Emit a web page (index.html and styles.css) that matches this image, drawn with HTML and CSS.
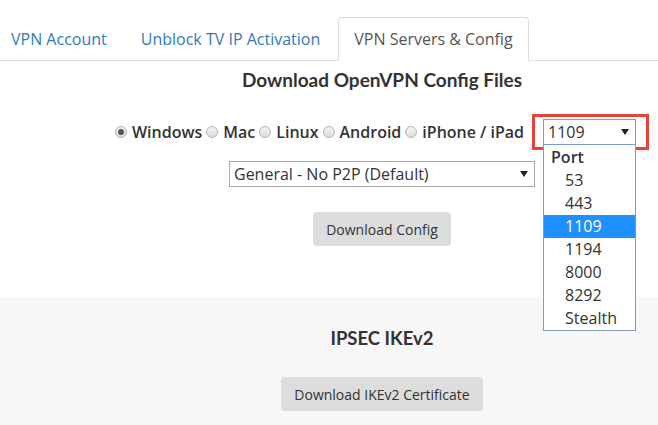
FILE: index.html
```html
<!DOCTYPE html>
<html lang="en">
<head>
    <meta charset="UTF-8">
    <meta name="viewport" content="width=device-width, initial-scale=1.0">
    <title>VPN Servers &amp; Config</title>
    <link rel="stylesheet" href="styles.css">
</head>
<body>
    <ul class="nav-tabs">
        <li><a href="#">VPN Account</a></li>
        <li><a href="#">Unblock TV IP Activation</a></li>
        <li class="active"><a href="#">VPN Servers &amp; Config</a></li>
    </ul>

    <section class="openvpn">
        <div class="inner">
            <h3>Download OpenVPN Config Files</h3>
            <div class="os-row">
                <label class="os"><input type="radio" name="os" checked> Windows</label>
                <label class="os"><input type="radio" name="os"> Mac</label>
                <label class="os"><input type="radio" name="os"> Linux</label>
                <label class="os"><input type="radio" name="os"> Android</label>
                <label class="os"><input type="radio" name="os"> iPhone / iPad</label>
                <span class="marker">
                    <span class="port-wrap">
                        <select class="port-select">
                            <option>1109</option>
                        </select>
                        <ul class="port-list">
                            <li class="group">Port</li>
                            <li>53</li>
                            <li>443</li>
                            <li class="selected">1109</li>
                            <li>1194</li>
                            <li>8000</li>
                            <li>8292</li>
                            <li>Stealth</li>
                        </ul>
                    </span>
                </span>
            </div>
            <select class="server-select">
                <option>General - No P2P (Default)</option>
            </select>
            <button class="btn">Download Config</button>
        </div>
    </section>

    <section class="ikev2">
        <div class="inner">
            <h3>IPSEC IKEv2</h3>
            <button class="btn">Download IKEv2 Certificate</button>
        </div>
    </section>
</body>
</html>
```

FILE: styles.css
```css
body {
    font-family: 'Open Sans', 'Liberation Sans', sans-serif;
    margin: 0;
    padding: 17px 0 0;
    background-color: #fff;
    color: #333;
    font-size: 16px;
    overflow: hidden;
}

.nav-tabs {
    display: flex;
    list-style: none;
    margin: 0;
    padding: 0;
    border-bottom: 1px solid #ddd;
}

.nav-tabs li {
    margin-right: 2px;
    margin-bottom: -1px;
}

.nav-tabs li:first-child {
    margin-left: -5px;
}

.nav-tabs a {
    display: block;
    padding: 10px 15px;
    line-height: 22px;
    color: #337ab7;
    text-decoration: none;
    border: 1px solid transparent;
    border-radius: 4px 4px 0 0;
}

.nav-tabs .active a {
    color: #555;
    background-color: #fff;
    border-color: #ddd;
    border-bottom-color: #fff;
}

.inner {
    margin-left: 106px;
    display: flex;
    flex-direction: column;
    align-items: center;
}

h3 {
    font-family: Lato, 'Open Sans', sans-serif;
    font-weight: 700;
    font-size: 19px;
    line-height: 24px;
    margin: 0;
}

.ikev2 h3 {
    font-size: 18.5px;
}

.openvpn {
    padding: 7px 0 51px;
}

.os-row {
    display: flex;
    align-items: center;
    margin-top: 22px;
}

.os {
    display: flex;
    align-items: center;
    font-weight: 600;
    font-size: 16px;
    margin-right: 4px;
}

.os input {
    appearance: none;
    margin: 0 5px 0 0;
    width: 12px;
    height: 12px;
    border: 1px solid #b5b5b5;
    border-radius: 50%;
    background: linear-gradient(#f4f4f4, #dcdcdc);
    display: grid;
    place-items: center;
}

.os input:checked::after {
    content: "";
    width: 6px;
    height: 6px;
    border-radius: 50%;
    background-color: #555;
}

.marker {
    display: inline-block;
    margin-left: 4px;
    border: 3px solid #e8413c;
    padding: 2px 10px 2px 8px;
}

.port-wrap {
    position: relative;
    display: block;
}

select {
    appearance: none;
    font-family: 'Open Sans', 'Liberation Sans', sans-serif;
    font-size: 16px;
    color: #333;
    background: #fff url("data:image/svg+xml,%3Csvg xmlns='http://www.w3.org/2000/svg' width='8' height='6'%3E%3Cpath d='M0 0h8L4 6z' fill='%23222'/%3E%3C/svg%3E") no-repeat right 6px center;
    border: 1px solid #a9a9a9;
    padding: 0 20px 0 4px;
    margin: 0;
    display: block;
}

.port-select {
    width: 93px;
    height: 26px;
    border-color: #7a9cd3;
}

.port-list {
    position: absolute;
    top: 26px;
    left: 0;
    width: 91px;
    margin: 0;
    padding: 1px 0 0;
    list-style: none;
    background: #fff;
    border: 1px solid #7f9db9;
    border-top: none;
    z-index: 2;
}

.port-list li {
    height: 23px;
    line-height: 23px;
    padding-left: 21px;
    font-size: 16px;
}

.port-list .group {
    font-weight: 600;
    padding-left: 7px;
}

.port-list .selected {
    background-color: #1e90ff;
    color: #fff;
}

.server-select {
    width: 306px;
    height: 26px;
    margin-top: 11px;
}

.btn {
    font-family: 'Open Sans', 'Liberation Sans', sans-serif;
    font-size: 14px;
    color: #333;
    background-color: #ddd;
    border: none;
    border-radius: 4px;
    padding: 0 13px;
    height: 34px;
    margin-top: 25px;
    cursor: pointer;
}

.ikev2 {
    background-color: #f7f7f7;
    padding: 29px 0 40px;
}

.ikev2 .btn {
    margin-top: 27px;
}
```
